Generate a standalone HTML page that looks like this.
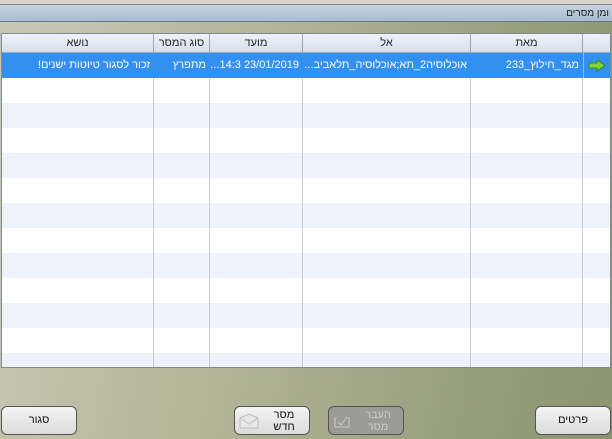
<!DOCTYPE html>
<html><head><meta charset="utf-8"><style>
*{margin:0;padding:0;box-sizing:border-box}
body{width:612px;height:439px;overflow:hidden;font-family:"Liberation Sans","Noto Sans CJK SC",sans-serif;font-size:11px;position:relative;background:linear-gradient(100deg,#c9c9b3 0%,#b3b598 40%,#99a07e 75%,#8b9371 100%)}
.top{position:absolute;left:0;top:0;width:612px;height:5px;background:#d8d6cc;border-bottom:1px solid #888}
.title{position:absolute;left:0;top:5px;width:612px;height:17px;background:linear-gradient(#c5d3e2,#a8bccf);border-bottom:1px solid #6a7a8a;direction:rtl;font-size:10px;line-height:17px;padding-right:3px;color:#222}
.tbl{position:absolute;left:1px;top:33px;width:610px;height:335px;background:#fff;border:1px solid #7f8a98;overflow:hidden}
.row{position:absolute;left:0;width:610px;height:25px}
.col{position:absolute;top:0;bottom:0;width:1px;background:#c8ccd4}
.hd{position:absolute;top:0;height:19px;background:linear-gradient(#eef3f8,#d6e1ec);border-right:1px solid #9aa8b8;border-bottom:1px solid #9aa8b8;text-align:center;line-height:19px;font-size:11px;color:#222}
.sel{top:19px;background:#3390f0;color:#fff}
.cell{position:absolute;top:0;height:25px;line-height:25px;direction:rtl;padding-right:3px;white-space:nowrap;overflow:hidden;font-size:11px}
.btn{position:absolute;top:406px;height:29px;width:76px;border:1px solid #555;border-radius:6px;background:linear-gradient(#f4f4f4,#dcdcdc);text-align:center;font-size:11px;color:#111}
</style></head><body>
<div class="top"></div>
<div class="title">ומן מסרים</div>
<div class="tbl">
<div class="row" style="top:44px;background:#fff"></div>
<div class="row" style="top:69px;background:#eef3fb"></div>
<div class="row" style="top:94px;background:#fff"></div>
<div class="row" style="top:119px;background:#eef3fb"></div>
<div class="row" style="top:144px;background:#fff"></div>
<div class="row" style="top:169px;background:#eef3fb"></div>
<div class="row" style="top:194px;background:#fff"></div>
<div class="row" style="top:219px;background:#eef3fb"></div>
<div class="row" style="top:244px;background:#fff"></div>
<div class="row" style="top:269px;background:#eef3fb"></div>
<div class="row" style="top:294px;background:#fff"></div>
<div class="row" style="top:319px;background:#eef3fb"></div>
<div class="col" style="left:151px"></div><div class="col" style="left:207px"></div><div class="col" style="left:300px"></div><div class="col" style="left:468px"></div><div class="col" style="left:580px"></div>
<div class="hd" style="left:0;width:152px">נושא</div>
<div class="hd" style="left:152px;width:56px">סוג המסר</div>
<div class="hd" style="left:208px;width:93px">מועד</div>
<div class="hd" style="left:301px;width:168px">אל</div>
<div class="hd" style="left:469px;width:112px">מאת</div>
<div class="hd" style="left:581px;width:29px"></div>
<div class="row sel">
<div class="cell" style="left:0;width:151px">זכור לסגור טיוטות ישנים!</div>
<div class="cell" style="left:152px;width:55px">מתפרץ</div>
<div class="cell" style="left:208px;width:92px">23/01/2019 14:3...</div>
<div class="cell" style="left:301px;width:167px">אוכלוסיה2_תא;אוכלוסיה_תלאביב...</div>
<div class="cell" style="left:469px;width:111px">מגד_חילוץ_233</div>
<div style="position:absolute;left:581px;top:0;width:1px;height:25px;background:#8ab8f0"></div>
<svg style="position:absolute;left:586px;top:6px" width="18" height="13" viewBox="0 0 18 13"><path d="M1 4h8V1l8 5.5-8 5.5V9H1z" fill="#7ed23a" stroke="#3a8a10" stroke-width="1"/></svg>
</div>
</div>
<div class="btn" style="left:1px;line-height:27px">סגור</div>
<div class="btn" style="left:234px;line-height:12px;padding-top:2px"><svg style="position:absolute;left:4px;top:6px" width="20" height="16"><path d="M1 5l9-4 9 4v10H1z" fill="#e8e8e8" stroke="#bbb"/><path d="M1 5l9 6 9-6" fill="none" stroke="#bbb"/></svg><div style="padding-left:24px">מסר<br>חדש</div></div>
<div class="btn" style="left:328px;background:#9a9a98;color:#ccc;line-height:12px;padding-top:2px"><svg style="position:absolute;left:4px;top:6px" width="18" height="16"><path d="M2 14V4M2 14h14V4M5 9l3 3 6-8" fill="none" stroke="#ccc"/></svg><div style="padding-left:24px">העבר<br>מסר</div></div>
<div class="btn" style="left:535px;line-height:27px">פרטים</div>
</body></html>
